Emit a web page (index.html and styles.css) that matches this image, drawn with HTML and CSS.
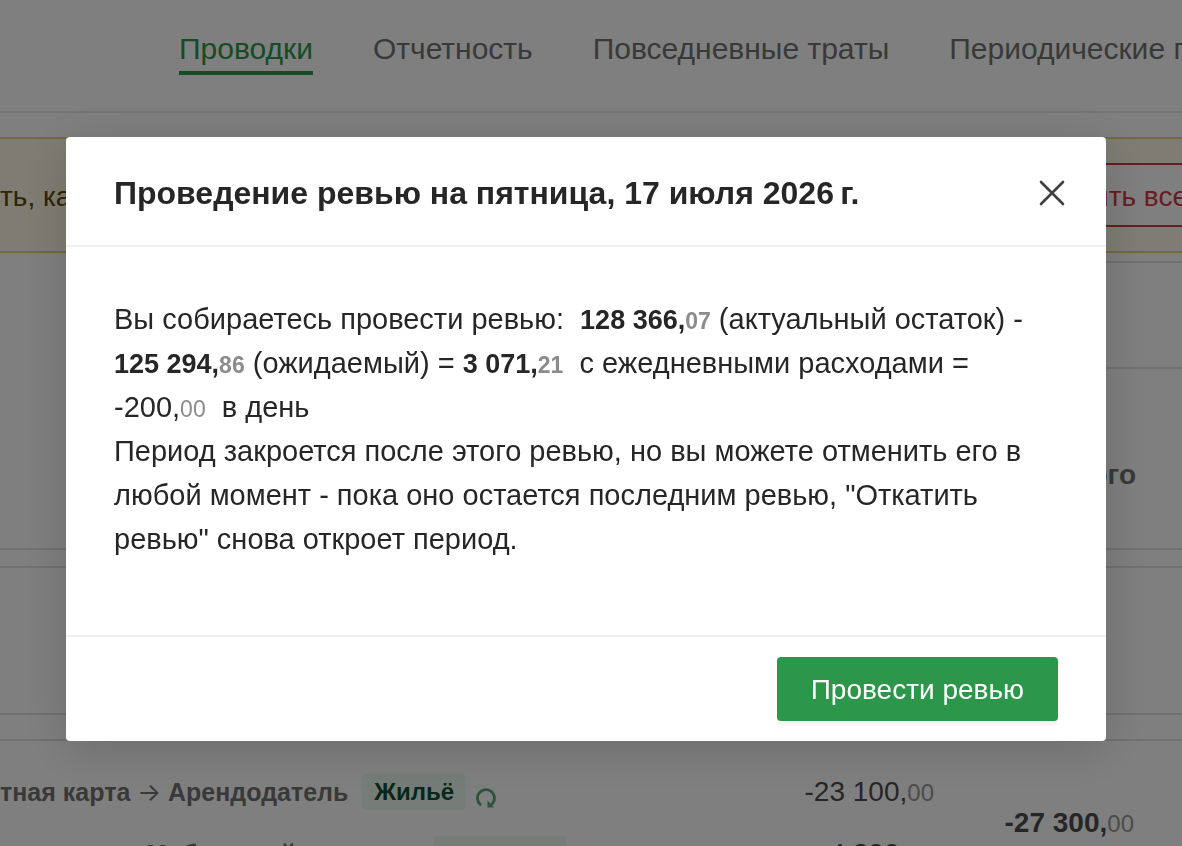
FILE: index.html
```html
<!DOCTYPE html>
<html lang="ru">
<head>
<meta charset="utf-8">
<title>Проводки</title>
<link rel="stylesheet" href="styles.css">
</head>
<body>
<div class="page">
  <header class="header">
    <nav class="nav">
      <a class="nav-link nav-link-active" href="#">Проводки</a>
      <a class="nav-link" href="#">Отчетность</a>
      <a class="nav-link" href="#">Повседневные траты</a>
      <a class="nav-link" href="#">Периодические п</a>
    </nav>
  </header>
  <section class="alert">
    <p class="alert-text">ть, ка</p>
    <button class="alert-button" type="button">ить все</button>
  </section>
  <main class="cards">
    <section class="card card-summary">
      <div class="summary-side">
        <div class="summary-head"></div>
        <div class="summary-total">ого</div>
      </div>
    </section>
    <section class="card card-empty"></section>
    <section class="card card-list">
      <ul class="entries">
        <li class="entry">
          <span class="entry-name">тная карта <span class="arrow">→</span> Арендодатель</span>
          <span class="tag">Жильё</span>
          <svg class="repeat" viewBox="0 0 20 20" aria-hidden="true"><path d="M5.2 17.2A8.5 8.5 0 1 1 15 17" fill="none" stroke="currentColor" stroke-width="2.8"/><path d="M11.5 12.5L18 19.5H11.5z" fill="currentColor"/></svg>
          <span class="entry-amount">-23 100,<small>00</small></span>
        </li>
        <li class="entry entry-second">
          <span class="entry-name">Мобильный</span>
          <span class="tag tag-wide"></span>
          <span class="entry-amount">-4 200,<small>00</small></span>
        </li>
      </ul>
      <div class="list-total">-27 300,<small>00</small></div>
    </section>
  </main>
</div>
<div class="overlay">
  <div class="modal" role="dialog" aria-modal="true" aria-labelledby="modal-title">
    <div class="modal-header">
      <h1 class="modal-title" id="modal-title">Проведение ревью на пятница, 17 июля 2026&#8239;г.</h1>
      <button class="close" type="button" aria-label="Закрыть">
        <svg class="close-icon" viewBox="0 0 28 28"><path d="M3 3l22 22M25 3L3 25" fill="none" stroke="currentColor" stroke-width="2.6" stroke-linecap="round"/></svg>
      </button>
    </div>
    <div class="modal-body">
      <p class="modal-text">Вы собираетесь провести ревью:&nbsp; <strong>128&nbsp;366,<small>07</small></strong> (актуальный остаток) - <strong>125&nbsp;294,<small>86</small></strong> (ожидаемый) = <strong>3&nbsp;071,<small>21</small></strong>&nbsp; с ежедневными расходами = <span class="amount">-200,<small>00</small></span>&nbsp; в день<br>Период закроется после этого ревью, но вы можете отменить его в любой момент - пока оно остается последним ревью, "Откатить ревью" снова откроет период.</p>
    </div>
    <div class="modal-footer">
      <button class="submit" type="button">Провести ревью</button>
    </div>
  </div>
</div>
</body>
</html>
```
FILE: styles.css
```css
* {
  box-sizing: border-box;
}

body {
  margin: 0;
  overflow: hidden;
  background: #fff;
  color: #262626;
  font: 28px/44px "Liberation Sans", Arial, sans-serif;
}

p, h1, ul {
  margin: 0;
  padding: 0;
}

button {
  font: inherit;
  cursor: pointer;
}

small {
  color: #8c8c8c;
  font-size: 24px;
  line-height: 1;
}

.page {
  height: 100vh;
  overflow: hidden;
}

.header {
  padding: 27px 0 36px 179px;
  border-bottom: 2px solid #e8e8e8;
}

.nav {
  display: flex;
  gap: 60px;
}

.nav-link {
  flex: none;
  border-bottom: 4px solid transparent;
  color: #737373;
  font-size: 30px;
  text-decoration: none;
  white-space: nowrap;
}

.nav-link-active {
  border-color: #2c974b;
  color: #2c974b;
}

.alert {
  display: flex;
  align-items: center;
  justify-content: space-between;
  height: 116px;
  margin-top: 24px;
  border: solid #e6d27a;
  border-width: 2px 0;
  background: #fffbe6;
  overflow: hidden;
}

.alert-text {
  padding-top: 4px;
  color: #614700;
}

.alert-button {
  height: 64px;
  margin-right: -20px;
  padding: 4px 12px 0 24px;
  border: 2px solid #cf3b45;
  background: #fff;
  color: #cf3b45;
}

.card {
  border-bottom: 2px solid #e2e2e2;
}

.card-summary {
  display: flex;
  justify-content: flex-end;
  padding-top: 8px;
}

.summary-side {
  width: 50%;
  border-top: 2px solid #e2e2e2;
  color: #737373;
  font-weight: bold;
}

.summary-head {
  height: 106px;
  margin-left: 32px;
  border-bottom: 2px solid #e2e2e2;
}

.summary-total {
  padding: 84px 46px 51px;
  text-align: right;
}

.card-empty {
  height: 149px;
  margin-top: 16px;
  border-top: 2px solid #e2e2e2;
}

.card-list {
  display: grid;
  grid-template-columns: 1fr 200px;
  align-items: center;
  margin-top: 24px;
  padding: 20px 48px 20px 0;
  border-top: 2px solid #e2e2e2;
}

.entries {
  list-style: none;
}

.entry {
  display: flex;
  align-items: center;
  height: 62px;
  white-space: nowrap;
}

.entry-name {
  color: #737373;
  font-size: 25px;
  font-weight: bold;
}

.arrow {
  font-family: Inter, sans-serif;
  font-weight: normal;
}

.tag {
  height: 36px;
  margin: 0 10px 0 14px;
  padding: 0 12px;
  border-radius: 4px;
  background: #edfaf3;
  color: #0f5132;
  font-size: 24px;
  font-weight: bold;
  line-height: 36px;
}

.repeat {
  width: 20px;
  height: 20px;
  margin-top: 12px;
  color: #5aa878;
}

.entry-amount {
  margin-left: auto;
  color: #4d4d4d;
}

.entry-second {
  padding-left: 146px;
}

.entry-second .entry-name {
  width: 274px;
}

.tag-wide {
  width: 132px;
}

.list-total {
  color: #4d4d4d;
  font-weight: bold;
  text-align: right;
}

.list-total small {
  font-weight: normal;
}

.card-list small {
  color: #999;
}

.overlay {
  position: fixed;
  inset: 0;
  display: flex;
  align-items: flex-start;
  padding: 137px 76px 0 66px;
  background: rgba(0, 0, 0, 0.5);
}

.modal {
  flex: 1;
  border-radius: 4px;
  background: #fff;
  box-shadow: 0 8px 48px rgba(0, 0, 0, 0.16);
}

.modal-header {
  display: flex;
  align-items: center;
  justify-content: space-between;
  padding: 34px 40px 30px 48px;
  border-bottom: 2px solid #f0f0f0;
}

.modal-title {
  font-size: 32px;
  font-weight: bold;
  line-height: 44px;
}

.close {
  display: flex;
  padding: 0;
  border: 0;
  background: none;
  color: #404040;
}

.close-icon {
  width: 28px;
  height: 28px;
}

.modal-body {
  padding: 50px 48px 74px;
}

.modal-text {
  font-size: 29px;
}

.modal-text strong {
  font-size: 27px;
  line-height: 1;
}

.modal-text small {
  font-size: 23px;
}

.amount {
  white-space: nowrap;
}

.modal-footer {
  display: flex;
  justify-content: flex-end;
  padding: 20px 48px;
  border-top: 2px solid #f0f0f0;
}

.submit {
  height: 64px;
  padding: 2px 34px 0;
  border: 0;
  border-radius: 4px;
  background: #2c974b;
  box-shadow: 0 4px 0 rgba(0, 0, 0, 0.04);
  color: #fff;
}
```
